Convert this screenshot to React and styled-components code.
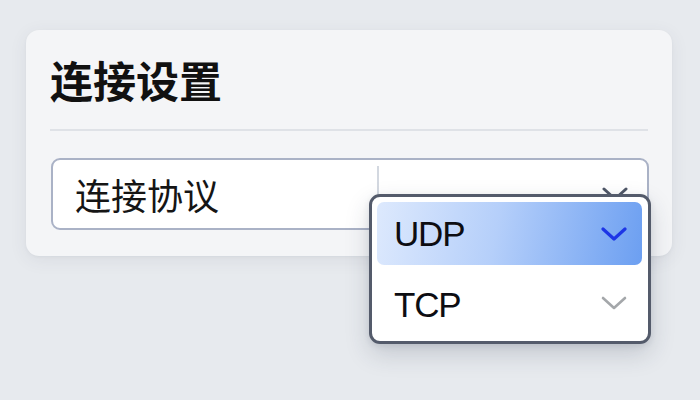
import React from "react";
import styled, { createGlobalStyle } from "styled-components";

const Global = createGlobalStyle`
  html, body { margin: 0; padding: 0; }
  body {
    width: 700px;
    height: 400px;
    overflow: hidden;
    background: #e7eaee;
    font-family: "Noto Sans", "Noto Sans CJK SC", sans-serif;
    color: #111;
  }
`;

const Page = styled.div`
  padding: 30px 28px 0 26px;
`;

const Card = styled.section`
  width: 646px;
  box-sizing: border-box;
  background: #f4f5f7;
  border-radius: 13px;
  box-shadow: 0 4px 18px rgba(60, 70, 90, 0.08), 0 1px 3px rgba(60, 70, 90, 0.05);
  padding: 20px 24px 26px 24px;
`;

const Title = styled.h1`
  margin: 0;
  font-family: "Noto Sans CJK SC", sans-serif;
  font-size: 43px;
  line-height: 58px;
  font-weight: 700;
  color: #111;
  letter-spacing: 0;
`;

const Divider = styled.hr`
  margin: 21px 0 27px 0;
  border: none;
  height: 2px;
  background: #dfe2e7;
`;

const SelectWrap = styled.div`
  position: relative;
`;

const SelectBox = styled.div`
  height: 72px;
  box-sizing: border-box;
  width: 598px;
  margin-left: 1px;
  border: 2px solid #aab2c6;
  border-radius: 9px;
  background: #ffffff;
  display: flex;
  align-items: center;
  padding-left: 22px;
`;

const Label = styled.span`
  font-family: "Noto Sans CJK SC", sans-serif;
  font-size: 36px;
  font-weight: 400;
  color: #151515;
  width: 302px;
  line-height: 1;
`;

const VSep = styled.span`
  width: 2px;
  align-self: stretch;
  margin: 6px 0;
  background: #d3d8e0;
`;

const Spacer = styled.span`
  flex: 1;
`;

const ChevronSlot = styled.span`
  display: flex;
  width: 26px;
  margin-right: 19px;
  margin-top: ${(p) => p.$offset || 0}px;
`;

const Menu = styled.div`
  position: absolute;
  left: 319px;
  top: 36px;
  width: 282px;
  height: 150px;
  box-sizing: border-box;
  border: 3px solid #545b6b;
  border-radius: 11px;
  background: #ffffff;
  box-shadow: 0 10px 24px rgba(40, 50, 70, 0.18), 0 2px 6px rgba(40, 50, 70, 0.1);
  padding: 5px 6px 0 5px;
  display: flex;
  flex-direction: column;
`;

const Option = styled.div`
  height: ${(p) => (p.$selected ? 63 : 76)}px;
  flex-shrink: 0;
  border-radius: 7px;
  display: flex;
  align-items: center;
  justify-content: space-between;
  padding: 0 15px 0 17px;
  box-sizing: border-box;
  background: ${(p) =>
    p.$selected
      ? "linear-gradient(100deg, #dde9fd 0%, #b5cffa 45%, #6c9ff1 100%)"
      : "transparent"};
`;

const OptionText = styled.span`
  font-family: "Liberation Sans", "Noto Sans", sans-serif;
  font-size: 35px;
  letter-spacing: -1.2px;
  color: #0d0d12;
  line-height: 1;
  margin-top: ${(p) => p.$dy || 0}px;
`;

const Chevron = ({ color, width = 3 }) => (
  <svg width="26" height="14" viewBox="0 0 26 14" fill="none">
    <path
      d="M2 2 L13 12 L24 2"
      stroke={color}
      strokeWidth={width}
      strokeLinecap="round"
      strokeLinejoin="round"
    />
  </svg>
);

export default function App() {
  return (
    <>
      <Global />
      <Page>
        <Card>
          <Title>连接设置</Title>
          <Divider />
          <SelectWrap>
            <SelectBox>
              <Label>连接协议</Label>
              <VSep />
              <Spacer />
              <ChevronSlot $offset={0}>
                <Chevron color="#4f5767" width={3} />
              </ChevronSlot>
            </SelectBox>
            <Menu role="listbox">
              <Option $selected role="option" aria-selected="true">
                <OptionText>UDP</OptionText>
                <Chevron color="#1d35e6" width={3.2} />
              </Option>
              <Option role="option" aria-selected="false">
                <OptionText $dy={2}>TCP</OptionText>
                <Chevron color="#a4a7aa" width={2.6} />
              </Option>
            </Menu>
          </SelectWrap>
        </Card>
      </Page>
    </>
  );
}
